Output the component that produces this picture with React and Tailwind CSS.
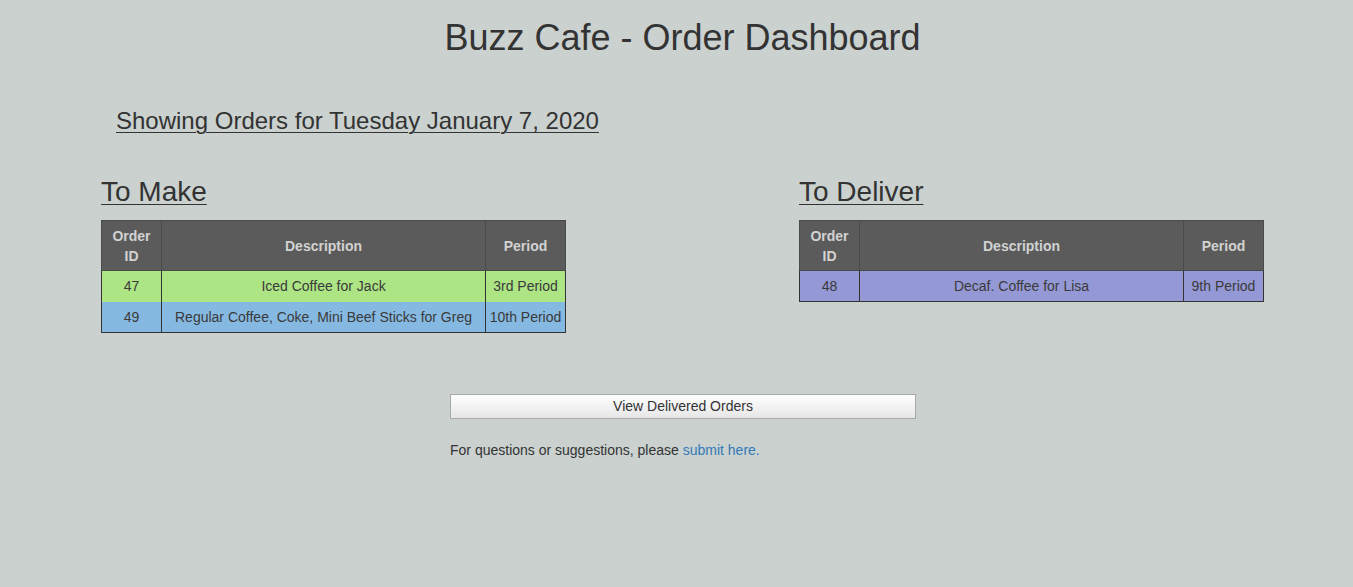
import React from 'react';

const toMake = [
  { id: 47, desc: 'Iced Coffee for Jack', period: '3rd Period', color: 'bg-[#ade584]' },
  { id: 49, desc: 'Regular Coffee, Coke, Mini Beef Sticks for Greg', period: '10th Period', color: 'bg-[#86b9e1]' },
];

const toDeliver = [
  { id: 48, desc: 'Decaf. Coffee for Lisa', period: '9th Period', color: 'bg-[#9499d6]' },
];

function OrderTable({ title, orders }) {
  return (
    <div className="w-[465px]">
      <h2 className="text-[28px] leading-[33px] underline decoration-1 underline-offset-[3px] mb-[12px]">{title}</h2>
      <table className="w-[464px] border-collapse border border-[#333] text-[14px] leading-[20px] table-fixed">
        <thead>
          <tr className="bg-[#5a5b5a] text-[#d2d2d2]">
            <th className="w-[60px] h-[50px] px-[5px] font-bold border border-[#4a4a4a]">Order ID</th>
            <th className="w-[324px] font-bold border border-[#4a4a4a]">Description</th>
            <th className="w-[80px] font-bold border border-[#4a4a4a]">Period</th>
          </tr>
        </thead>
        <tbody>
          {orders.map((o) => (
            <tr key={o.id} className={`${o.color} text-[#3a3a3a]`}>
              <td className="h-[31px] text-center border-x border-[#333]">{o.id}</td>
              <td className="text-center border-x border-[#333] whitespace-nowrap">{o.desc}</td>
              <td className="text-center border-x border-[#333] whitespace-nowrap">{o.period}</td>
            </tr>
          ))}
        </tbody>
      </table>
    </div>
  );
}

export default function App() {
  return (
    <div className="min-h-[587px] bg-[#cad1cf] text-[#333] font-['Liberation_Sans',Arial,sans-serif]">
      <h1 className="pt-[18px] pl-[12px] text-[36px] leading-[40px] text-center">Buzz Cafe - Order Dashboard</h1>

      <h3 className="mt-[50px] ml-[116px] text-[24px] leading-[26px] underline decoration-1 underline-offset-[3px]">
        Showing Orders for Tuesday January 7, 2020
      </h3>

      <div className="mt-[41px] flex pl-[101px] gap-[233px]">
        <OrderTable title="To Make" orders={toMake} />
        <OrderTable title="To Deliver" orders={toDeliver} />
      </div>

      <div className="ml-[450px] w-[466px] mt-[61px]">
        <button className="w-full h-[25px] text-[14px] text-[#333] border border-[#a9a9a9] bg-gradient-to-b from-white to-[#e6e6e6]">
          View Delivered Orders
        </button>
        <p className="mt-[21px] text-[14px] leading-[20px] text-[#333]">
          For questions or suggestions, please <a href="#" className="text-[#337ab7]">submit here.</a>
        </p>
      </div>
    </div>
  );
}
